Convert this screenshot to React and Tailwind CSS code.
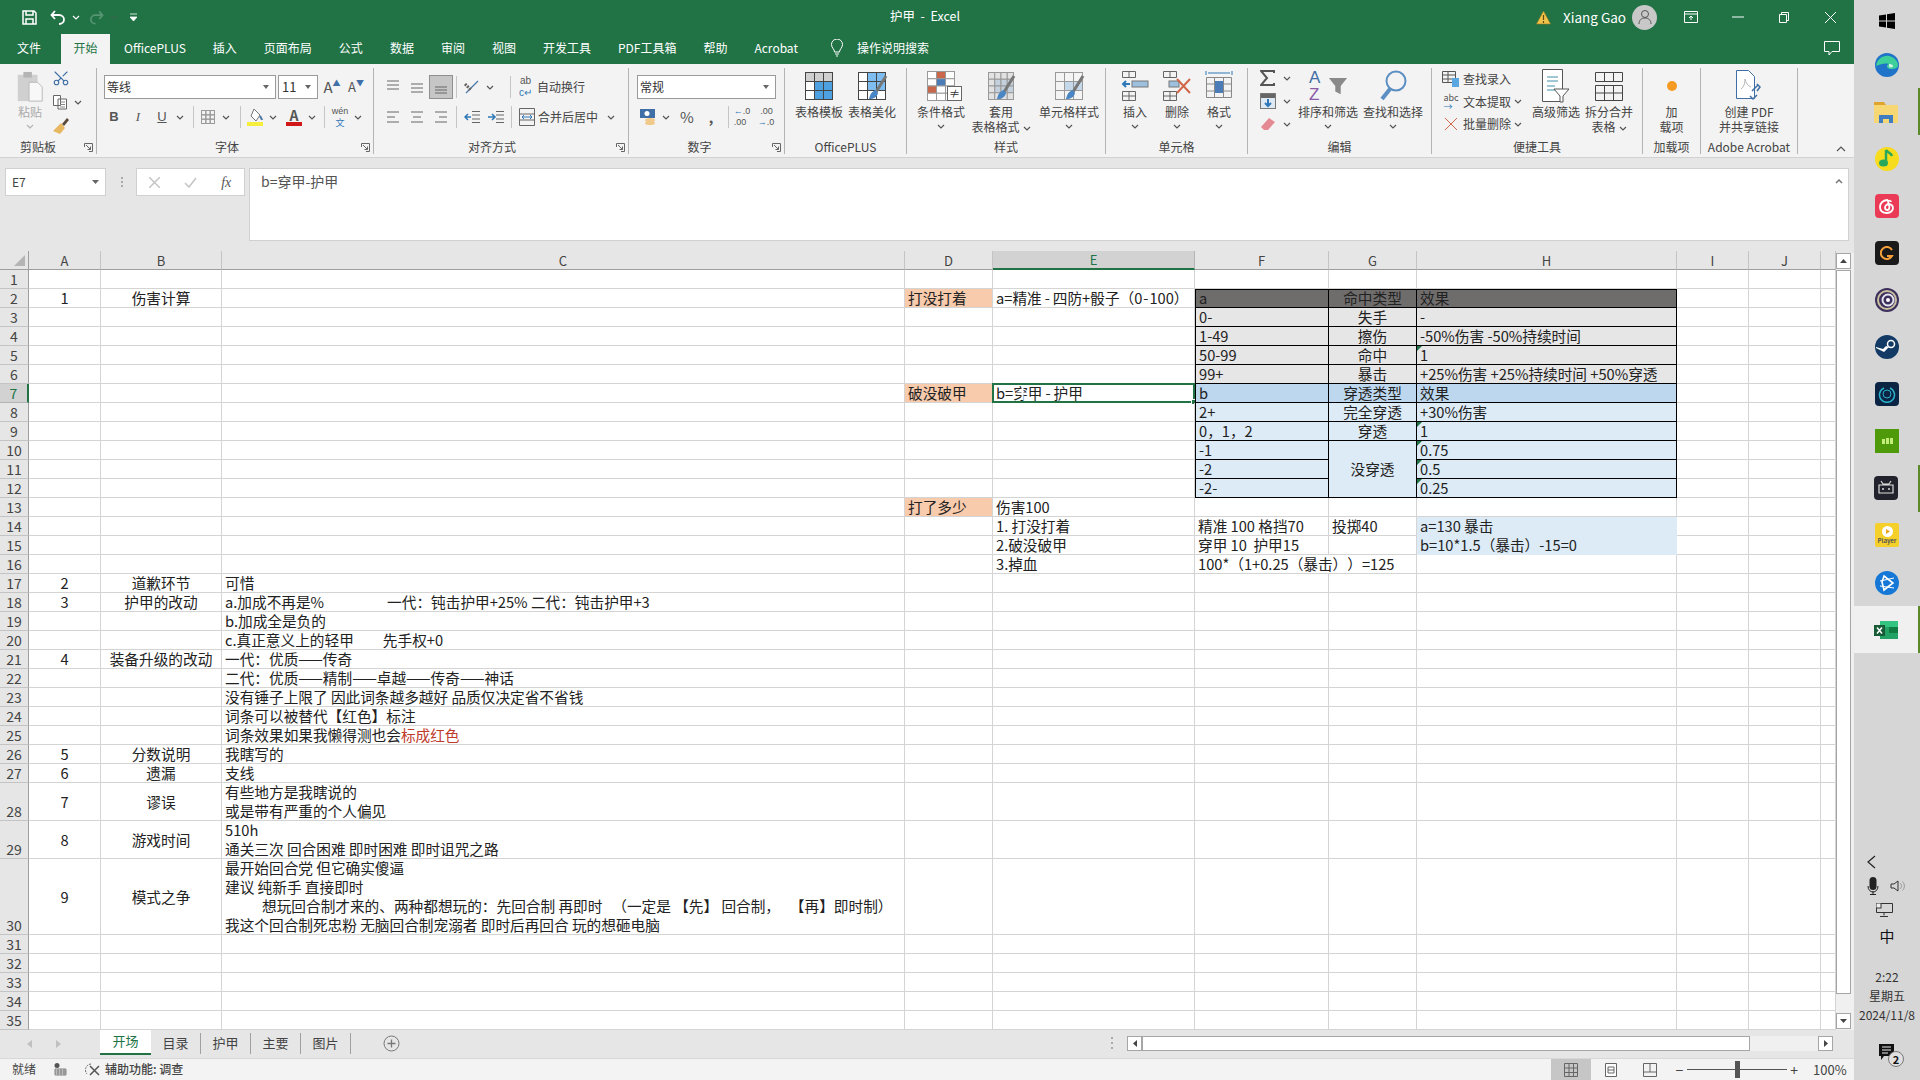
import { Scissors } from 'lucide-react';

const COLS = ['A', 'B', 'C', 'D', 'E', 'F', 'G', 'H', 'I', 'J', ''];

const FILLS = {
  head: 'bg-[#6f6c6c]',
  grey: 'bg-[#e7e6e6]',
  blueHead: 'bg-[#bdd7ee]',
  blue: 'bg-[#ddebf7]',
  orange: 'bg-[#f8cbad]',
};

const CELLS = {
  A2: { t: '1', center: true }, B2: { t: '伤害计算', center: true },
  D2: { t: '打没打着', fill: 'orange' },
  E2: { t: <>a=精准<span className="mx-[3px]">-</span>四防+骰子（0<span className="mx-[1px]">-</span>100）</> },
  F2: { t: 'a', fill: 'head' }, G2: { t: '命中类型', fill: 'head', center: true }, H2: { t: '效果', fill: 'head' },
  F3: { t: '0-', fill: 'grey' }, G3: { t: '失手', fill: 'grey', center: true }, H3: { t: '-', fill: 'grey' },
  F4: { t: '1-49', fill: 'grey' }, G4: { t: '擦伤', fill: 'grey', center: true }, H4: { t: '-50%伤害 -50%持续时间', fill: 'grey' },
  F5: { t: '50-99', fill: 'grey' }, G5: { t: '命中', fill: 'grey', center: true }, H5: { t: '1', fill: 'grey', flag: true },
  F6: { t: '99+', fill: 'grey' }, G6: { t: '暴击', fill: 'grey', center: true }, H6: { t: '+25%伤害 +25%持续时间 +50%穿透', fill: 'grey' },
  D7: { t: '破没破甲', fill: 'orange' },
  E7: { t: <>b=穿甲<span className="mx-[3px]">-</span>护甲</>, active: true },
  F7: { t: 'b', fill: 'blueHead' }, G7: { t: '穿透类型', fill: 'blueHead', center: true }, H7: { t: '效果', fill: 'blueHead' },
  F8: { t: '2+', fill: 'blue' }, G8: { t: '完全穿透', fill: 'blue', center: true }, H8: { t: '+30%伤害', fill: 'blue' },
  F9: { t: '0，1，2', fill: 'blue' }, G9: { t: '穿透', fill: 'blue', center: true }, H9: { t: '1', fill: 'blue', flag: true },
  F10: { t: '-1', fill: 'blue' }, G10: { t: '没穿透', fill: 'blue', center: true, merged: true, middle: true }, H10: { t: '0.75', fill: 'blue', flag: true },
  F11: { t: '-2', fill: 'blue' }, H11: { t: '0.5', fill: 'blue', flag: true },
  F12: { t: '-2-', fill: 'blue' }, H12: { t: '0.25', fill: 'blue', flag: true },
  D13: { t: '打了多少', fill: 'orange' }, E13: { t: '伤害100' },
  E14: { t: '1. 打没打着' }, F14: { t: '精准 100 格挡70' }, G14: { t: '投掷40' }, H14: { t: 'a=130 暴击', fill: 'blue', plain: true },
  E15: { t: '2.破没破甲' }, F15: { t: '穿甲 10  护甲15' }, H15: { t: 'b=10*1.5（暴击）-15=0', fill: 'blue', plain: true },
  E16: { t: '3.掉血' }, F16: { t: '100*（1+0.25（暴击））=125', wide: true },
  A17: { t: '2', center: true }, B17: { t: '道歉环节', center: true }, C17: { t: '可惜' },
  A18: { t: '3', center: true }, B18: { t: '护甲的改动', center: true },
  C18: { t: <>a.加成不再是%<span className="ml-[63px]">一代：钝击护甲+25% 二代：钝击护甲+3</span></> },
  C19: { t: 'b.加成全是负的' },
  C20: { t: <>c.真正意义上的轻甲<span className="ml-[29px]">先手权+0</span></> },
  A21: { t: '4', center: true }, B21: { t: '装备升级的改动', center: true }, C21: { t: '一代：优质——传奇' },
  C22: { t: '二代：优质——精制——卓越——传奇——神话' },
  C23: { t: '没有锤子上限了 因此词条越多越好 品质仅决定省不省钱' },
  C24: { t: '词条可以被替代【红色】标注' },
  C25: { t: <>词条效果如果我懒得测也会<span className="text-[#c0392b]">标成红色</span></> },
  A26: { t: '5', center: true }, B26: { t: '分数说明', center: true }, C26: { t: '我瞎写的' },
  A27: { t: '6', center: true }, B27: { t: '遗漏', center: true }, C27: { t: '支线' },
  A28: { t: '7', center: true, middle: true }, B28: { t: '谬误', center: true, middle: true },
  C28: { lines: ['有些地方是我瞎说的', '或是带有严重的个人偏见'] },
  A29: { t: '8', center: true, middle: true }, B29: { t: '游戏时间', center: true, middle: true },
  C29: { lines: ['510h', '通关三次 回合困难 即时困难 即时诅咒之路'] },
  A30: { t: '9', center: true, middle: true }, B30: { t: '模式之争', center: true, middle: true },
  C30: {
    lines: [
      '最开始回合党 但它确实傻逼',
      '建议 纯新手 直接即时',
      <span className="ml-[37px]">想玩回合制才来的、两种都想玩的：先回合制 再即时   （一定是 【先】 回合制，   【再】即时制）</span>,
      '我这个回合制死忠粉 无脑回合制宠溺者 即时后再回合 玩的想砸电脑',
    ],
  },
};

const TABLE_COLS = ['F', 'G', 'H'];

function Chev({ className = '' }) {
  return (
    <svg width="8" height="5" viewBox="0 0 8 5" className={className}>
      <path d="M1 1l3 3 3-3" fill="none" stroke="#555" strokeWidth="1.2" />
    </svg>
  );
}

function Slot({ w = 'w-[24px]', children, className = '' }) {
  return <div className={`flex h-[24px] shrink-0 items-center justify-center ${w} ${className}`}>{children}</div>;
}

function Sep({ className = '' }) {
  return <div className={`h-[22px] w-px shrink-0 bg-[#c6c6c6] ${className}`} />;
}

function Group({ w, label, launcher, children }) {
  return (
    <div className={`my-[4px] flex h-[86px] shrink-0 flex-col border-r border-[#b4b4b4] ${w}`}>
      <div className="flex h-[70px]">{children}</div>
      <div className="relative h-[16px] text-center text-[12px] leading-[18px] text-[#444]">
        {label}
        {launcher && (
          <svg width="9" height="9" viewBox="0 0 9 9" className="absolute right-[3px] top-[5px]">
            <path d="M.5 4V.5H8.5V8.5H5M2 2l4.5 4.5M3.5 6.5h3v-3" fill="none" stroke="#666" strokeWidth="1" />
          </svg>
        )}
      </div>
    </div>
  );
}

function Big({ w, icon, lines, chev, inlineChev }) {
  return (
    <div className={`flex shrink-0 flex-col items-center ${w}`}>
      <div className="flex h-[36px] items-center justify-center">{icon}</div>
      {lines.map((line, i) => (
        <div key={i} className="whitespace-nowrap text-[12px] leading-[15px] text-[#444]">
          {line}
          {inlineChev && i === lines.length - 1 && <Chev className="ml-[3px] inline" />}
        </div>
      ))}
      {chev && <div className="flex h-[15px] items-center"><Chev /></div>}
    </div>
  );
}

function Lines({ y = [2, 7, 12], x = [[2, 14], [2, 14], [2, 14]] }) {
  return (
    <svg width="16" height="14" viewBox="0 0 16 14">
      {y.map((v, i) => <path key={i} d={`M${x[i][0]} ${v}H${x[i][1]}`} stroke="#666" strokeWidth="1" />)}
    </svg>
  );
}

function SmallRow({ icon, label, chev }) {
  return (
    <div className="flex h-[22.5px] items-center whitespace-nowrap text-[12px] text-[#444]">
      <div className="flex w-[24px] justify-center">{icon}</div>
      <span>{label}</span>
      {chev && <Chev className="ml-[3px]" />}
    </div>
  );
}

function GridIcon({ w = 28, h = 28, rows = 3, cols = 3, fill, stroke = '#666' }) {
  const cells = [];
  for (let r = 0; r < rows; r++) {
    for (let c = 0; c < cols; c++) {
      cells.push(<rect key={`${r}-${c}`} x={0.5 + (c * (w - 1)) / cols} y={0.5 + (r * (h - 1)) / rows} width={(w - 1) / cols} height={(h - 1) / rows} fill={fill ? fill(r, c) : 'none'} stroke={stroke} />);
    }
  }
  return <svg width={w} height={h}>{cells}</svg>;
}

function Brush({ className }) {
  return (
    <svg width="20" height="26" viewBox="0 0 20 26" className={className}>
      <path d="M18 1L8 17" stroke="#777" strokeWidth="3" />
      <path d="M8 15c-4 1-6 4-7 9 5 0 8-2 9-6z" fill="#4b86c4" />
    </svg>
  );
}

function Ribbon() {
  return (
    <div className="flex h-[94px] border-b border-[#d2d2d2] bg-[#f3f3f3] [font-family:'Noto_Sans_CJK_SC',sans-serif]">
      <Group w="w-[97px]" label={<span className="pr-[20px]">剪贴板</span>} launcher>
        <div className="ml-[14px] flex w-[32px] flex-col items-center pt-[3px]">
          <svg width="28" height="32" viewBox="0 0 28 34">
            <rect x="1" y="4" width="21" height="28" fill="#d0d0d0" />
            <rect x="7" y="1" width="9" height="6" fill="#b5b5b5" />
            <path d="M13 12h9l5 5v15H13z" fill="#f8f8f8" stroke="#b8b8b8" />
          </svg>
          <span className="text-[12px] leading-[17px] text-[#aaa]">粘贴</span>
          <Chev className="mt-[4px] opacity-40" />
        </div>
        <div className="ml-[6px] flex flex-col items-start gap-[7px] pt-[1px]">
          <Scissors size={18} color="#3f6fa6" strokeWidth={1.5} className="-rotate-90" />
          <div className="flex items-center gap-[6px]">
            <svg width="16" height="16" viewBox="0 0 16 16"><path d="M1.5 1.5h7v10h-7zM6 5h8.5v10H6z" fill="#fff" stroke="#666" /><path d="M8 8h5M8 10.500h5M8 13h5" stroke="#888" /></svg>
            <Chev />
          </div>
          <svg width="18" height="18" viewBox="0 0 18 18"><path d="M10 7l5-6 2 2-5 6z" fill="#5b4a3a" /><path d="M9 6l4 5-5 6-7-3z" fill="#e8b860" /></svg>
        </div>
      </Group>

      <Group w="w-[277px]" label={<span className="pr-[16px]">字体</span>} launcher>
        <div className="flex w-full flex-col pt-[7px]">
          <div className="flex h-[24px] items-center">
            <div className="ml-[7px] flex h-[24px] w-[172px] items-center justify-between border border-[#9a9a9a] bg-white pl-[2px] pr-[6px] text-[12px] text-[#333]">等线<svg width="6" height="4"><path d="M0 0h6L3 4z" fill="#666" /></svg></div>
            <div className="ml-[2px] flex h-[24px] w-[40px] items-center justify-between border border-[#9a9a9a] bg-white pl-[3px] pr-[6px] text-[13px] text-[#333]">11<svg width="6" height="4"><path d="M0 0h6L3 4z" fill="#666" /></svg></div>
            <Slot className="ml-[2px] text-[15px] text-[#555]">A<sup className="text-[8px] text-[#3f6fa6]">▲</sup></Slot>
            <Slot className="text-[13px] text-[#555]">A<sup className="text-[8px] text-[#3f6fa6]">▼</sup></Slot>
          </div>
          <div className="mt-[6px] flex h-[24px] items-center pl-[5px] text-[#555]">
            <Slot className="text-[13px] font-bold [font-family:'Liberation_Sans',sans-serif]">B</Slot>
            <Slot className="text-[13px] italic [font-family:'Liberation_Serif',serif]">I</Slot>
            <Slot className="text-[13px] underline [font-family:'Liberation_Sans',sans-serif]">U</Slot>
            <Slot w="w-[12px]"><Chev /></Slot>
            <Sep className="ml-[7px]" />
            <Slot className="ml-[2px]"><GridIcon w={14} h={14} rows={3} cols={3} stroke="#9a9a9a" /></Slot>
            <Slot w="w-[12px]"><Chev /></Slot>
            <Sep className="ml-[8px]" />
            <Slot className="ml-[2px]">
              <svg width="18" height="18" viewBox="0 0 18 18"><path d="M8 1l6 6-4 6-5-5z" fill="#fff" stroke="#777" /><path d="M14 8c1 2 2 3 2 4" stroke="#4b78a8" strokeWidth="2" fill="none" /><rect x="1" y="14" width="16" height="4" fill="#f6ee3c" /></svg>
            </Slot>
            <Slot w="w-[12px]"><Chev /></Slot>
            <Slot className="ml-[3px]">
              <div className="flex flex-col items-center text-[14px] font-bold leading-[13px] text-[#555]">A<div className="h-[4px] w-[16px] bg-[#d01818]" /></div>
            </Slot>
            <Slot w="w-[12px]"><Chev /></Slot>
            <Sep className="ml-[6px]" />
            <Slot className="ml-[3px]">
              <div className="flex flex-col items-center text-[9px] leading-[12px] text-[#555]">
                <span className="[font-family:'Liberation_Sans',sans-serif]">wén</span>
                <span className="text-[#2f78b7]">文</span>
              </div>
            </Slot>
            <Slot w="w-[12px]"><Chev /></Slot>
          </div>
        </div>
      </Group>

      <Group w="w-[255px]" label={<span className="pr-[18px]">对齐方式</span>} launcher>
        <div className="flex w-full flex-col pt-[7px] text-[12px] text-[#444]">
          <div className="flex h-[24px] items-center pl-[7px]">
            <Slot><Lines y={[1, 5, 9]} x={[[2, 14], [2, 14], [2, 14]]} /></Slot>
            <Slot><Lines y={[4, 8, 12]} /></Slot>
            <Slot className="border border-[#8f8f8f] bg-[#c6c6c6]"><Lines y={[7, 10, 13]} /></Slot>
            <Sep className="ml-[3px]" />
            <Slot className="ml-[3px]">
              <svg width="18" height="18" viewBox="0 0 18 18"><path d="M3 15L15 3" stroke="#4b78a8" strokeWidth="1.2" /><path d="M2 6l6 6" stroke="#666" strokeWidth="3" strokeDasharray="2 1" /></svg>
            </Slot>
            <Slot w="w-[12px]"><Chev /></Slot>
            <Sep className="ml-[14px]" />
            <Slot w="w-[23px]" className="ml-[3px]">
              <div className="flex flex-col items-center text-[10px] leading-[12px] text-[#555] [font-family:'Liberation_Sans',sans-serif]">ab<span className="text-[#2f78b7]">c↵</span></div>
            </Slot>
            <span>自动换行</span>
          </div>
          <div className="mt-[6px] flex h-[24px] items-center pl-[7px]">
            <Slot><Lines x={[[2, 14], [2, 10], [2, 14]]} /></Slot>
            <Slot><Lines x={[[2, 14], [4, 12], [2, 14]]} /></Slot>
            <Slot><Lines x={[[2, 14], [6, 14], [2, 14]]} /></Slot>
            <Sep className="ml-[3px]" />
            <Slot className="ml-[3px]">
              <svg width="16" height="14" viewBox="0 0 16 14"><path d="M8 1.500h8M8 5h8M8 9h8M8 12.500h8" stroke="#666" /><path d="M7 7H1M4 4L1 7l3 3" stroke="#2f78b7" strokeWidth="1.500" fill="none" /></svg>
            </Slot>
            <Slot>
              <svg width="16" height="14" viewBox="0 0 16 14"><path d="M8 1.500h8M8 5h8M8 9h8M8 12.500h8" stroke="#666" /><path d="M0 7h6M4 4l3 3-3 3" stroke="#2f78b7" strokeWidth="1.500" fill="none" /></svg>
            </Slot>
            <Sep className="ml-[3px]" />
            <Slot w="w-[23px]" className="ml-[3px]">
              <svg width="16" height="18" viewBox="0 0 16 18"><path d="M.5.5h15v17H.5zM.5 6h15M.5 12h15" fill="none" stroke="#666" /><path d="M3 9h10M3 9l2-2M3 9l2 2M13 9l-2-2M13 9l-2 2" stroke="#2f78b7" /></svg>
            </Slot>
            <span>合并后居中</span>
            <Chev className="ml-[9px]" />
          </div>
        </div>
      </Group>

      <Group w="w-[156px]" label={<span className="pr-[14px]">数字</span>} launcher>
        <div className="flex w-full flex-col pt-[7px] text-[#555]">
          <div className="ml-[8px] flex h-[24px] w-[139px] items-center justify-between border border-[#9a9a9a] bg-white pl-[2px] pr-[6px] text-[12px] text-[#333]">常规<svg width="6" height="4"><path d="M0 0h6L3 4z" fill="#666" /></svg></div>
          <div className="mt-[6px] flex h-[24px] items-center pl-[7px]">
            <Slot>
              <svg width="18" height="20" viewBox="0 0 18 20"><rect x="1" y="2" width="15" height="9" fill="#3f6fa6" /><circle cx="8" cy="6.500" r="2.500" fill="#fff" /><ellipse cx="11" cy="13" rx="5" ry="2" fill="#f1c98a" /><ellipse cx="11" cy="16" rx="5" ry="2" fill="#f1c98a" /></svg>
            </Slot>
            <Slot w="w-[12px]"><Chev /></Slot>
            <Slot className="ml-[3px] text-[15px]">%</Slot>
            <Slot className="text-[14px] font-bold">,</Slot>
            <Sep className="ml-[5px]" />
            <Slot className="ml-[1px]"><div className="text-[9px] leading-[11px] [font-family:'Liberation_Sans',sans-serif]"><span className="text-[#2f78b7]">←</span>.0<br />.00</div></Slot>
            <Slot><div className="text-[9px] leading-[11px] [font-family:'Liberation_Sans',sans-serif]">&nbsp;.00<br /><span className="text-[#2f78b7]">→</span>.0</div></Slot>
          </div>
        </div>
      </Group>

      <Group w="w-[122px]" label="OfficePLUS">
        <Big w="ml-[7px] w-[54px]" lines={['表格模板']} icon={<GridIcon w={28} h={28} rows={3} cols={3} fill={(r, c) => (r === 0 ? '#cfcfcf' : c > 0 ? '#4ea1e0' : '#fff')} stroke="#444" />} />
        <Big w="w-[52px]" lines={['表格美化']} icon={
          <div className="relative">
            <GridIcon w={28} h={28} rows={3} cols={3} fill={(r, c) => (r < 2 && c > 0 ? '#7fbdf0' : '#fff')} stroke="#444" />
            <Brush className="absolute left-[10px] top-[3px]" />
          </div>} />
      </Group>

      <Group w="w-[199px]" label="样式">
        <Big w="ml-[4px] w-[60px]" lines={['条件格式']} chev icon={
          <div className="relative">
            <GridIcon w={28} h={30} rows={4} cols={3} fill={(r, c) => (c === 1 && r < 2 ? (r === 0 ? '#c8674a' : '#4b7cb8') : c === 0 && r === 2 ? '#c8674a' : '#fff')} stroke="#999" />
            <div className="absolute -right-[7px] bottom-0 flex h-[15px] w-[15px] items-center justify-center border border-[#666] bg-white text-[11px] leading-none text-[#333]">≠</div>
          </div>} />
        <Big w="w-[60px]" lines={['套用', '表格格式']} inlineChev icon={
          <div className="relative">
            <GridIcon w={26} h={28} rows={4} cols={4} fill={(r, c) => (r > 0 && c > 0 && r < 3 ? '#c4d0dc' : '#e2e2e2')} stroke="#999" />
            <Brush className="absolute left-[8px] top-[3px]" />
          </div>} />
        <Big w="ml-[4px] w-[68px]" lines={['单元格样式']} chev icon={
          <div className="relative">
            <GridIcon w={28} h={28} rows={3} cols={3} fill={(r, c) => (r === 1 && c > 0 ? '#c4d8ea' : '#f4f4f4')} stroke="#999" />
            <Brush className="absolute left-[10px] top-[3px]" />
          </div>} />
      </Group>

      <Group w="w-[142px]" label="单元格">
        <Big w="ml-[8px] w-[42px]" lines={['插入']} chev icon={
          <svg width="28" height="32" viewBox="0 0 28 32"><path d="M1.500 1.500h13v6h-13zM8 1.500v6M1.500 21.500h13v9h-13zM1.500 26h13M8 21.500v9" fill="none" stroke="#666" /><path d="M9 14H2M5 11l-3 3 3 3" stroke="#2f78b7" strokeWidth="2" fill="none" /><rect x="11" y="11" width="16" height="6" fill="#9cc0dd" stroke="#777" /></svg>} />
        <Big w="w-[42px]" lines={['删除']} chev icon={
          <svg width="30" height="32" viewBox="0 0 30 32"><path d="M1.500 1.500h13v6h-13zM8 1.500v6M1.500 21.500h13v9h-13zM1.500 26h13M8 21.500v9" fill="none" stroke="#666" /><rect x="7" y="11" width="10" height="6" fill="#9cc0dd" stroke="#777" /><path d="M15 9l13 14M28 9L15 23" stroke="#d0664a" strokeWidth="2" /></svg>} />
        <Big w="w-[42px]" lines={['格式']} chev icon={
          <svg width="28" height="34" viewBox="0 0 28 34"><path d="M1 2v4M27 2v4M3 4h22" stroke="#2f78b7" fill="none" /><path d="M1.500 8.500h25v20h-25zM9.500 8.500v20M18.500 8.500v20M1.500 15h25M1.500 22h25" fill="none" stroke="#888" /><rect x="10" y="12" width="8" height="12" fill="#4b7cb8" /></svg>} />
      </Group>

      <Group w="w-[184px]" label="编辑">
        <div className="ml-[6px] flex w-[44px] shrink-0 flex-col gap-[3px]">
          <div className="flex h-[20px] items-center gap-[7px] pl-[6px]">
            <svg width="16" height="16" viewBox="0 0 16 16"><path d="M14 3V1H1l6 7-6 7h13v-2" fill="none" stroke="#555" strokeWidth="2" /></svg><Chev />
          </div>
          <div className="flex h-[20px] items-center gap-[7px] pl-[6px]">
            <svg width="16" height="16" viewBox="0 0 16 16"><rect x=".5" y=".5" width="15" height="15" fill="#dfe9f3" stroke="#777" /><rect x="1" y="1" width="14" height="4" fill="#666" /><path d="M8 6v7M5 10l3 3 3-3" stroke="#2f78b7" strokeWidth="2" fill="none" /></svg><Chev />
          </div>
          <div className="flex h-[20px] items-center gap-[7px] pl-[6px]">
            <svg width="16" height="14" viewBox="0 0 16 14"><path d="M9 1l6 4-7 8H4L1 10z" fill="#e58a92" /></svg><Chev />
          </div>
        </div>
        <Big w="w-[60px]" lines={['排序和筛选']} chev icon={
          <div className="relative flex h-[36px] w-[42px] flex-col items-start pl-[2px] pt-[1px] text-[17px] leading-[17px] text-[#8a5ba8] [font-family:'Liberation_Sans',sans-serif]">
            <span className="text-[#3f6fa6]">A</span><span>Z</span>
            <svg width="22" height="20" viewBox="0 0 22 22" className="absolute right-0 top-[9px]"><path d="M1 1h20l-7 9v9l-6-3v-6z" fill="#8a8a8a" /></svg>
          </div>} />
        <Big w="ml-[3px] w-[64px]" lines={['查找和选择']} chev icon={
          <svg width="28" height="34" viewBox="0 0 28 34"><circle cx="17" cy="12" r="9.500" fill="none" stroke="#5b8ec2" strokeWidth="2" /><path d="M11 20L3 30" stroke="#5b8ec2" strokeWidth="4" /></svg>} />
      </Group>

      <Group w="w-[211px]" label="便捷工具">
        <div className="ml-[7px] w-[91px] shrink-0">
          <SmallRow label="查找录入" icon={<svg width="18" height="18" viewBox="0 0 18 18"><path d="M.5 1.500h13v11H.5zM.5 5h13M.5 9h13M6 1.500v11" fill="none" stroke="#555" /><rect x="10" y="8" width="7" height="9" fill="#5aa6e0" /></svg>} />
          <SmallRow label="文本提取" chev icon={<div className="flex flex-col text-[9px] leading-[9px] text-[#555]">abc<span className="text-[#2f78b7]">→</span></div>} />
          <SmallRow label="批量删除" chev icon={<svg width="14" height="14" viewBox="0 0 14 14"><path d="M1 1l12 12M13 1L1 13" stroke="#d0664a" /></svg>} />
        </div>
        <Big w="w-[52px]" lines={['高级筛选']} icon={
          <svg width="28" height="34" viewBox="0 0 28 34"><path d="M.5.500h20v32H.5z" fill="#fff" stroke="#555" /><path d="M5 8h11M5 12h11M5 17h8M5 21h8" stroke="#3f8fa8" /><path d="M12 20h15l-6 7v6h-3v-6z" fill="#fff" stroke="#555" /></svg>} />
        <Big w="w-[54px]" lines={['拆分合并', '表格']} inlineChev icon={
          <svg width="28" height="32" viewBox="0 0 28 32"><path d="M.5 2.500h27v9H.5zM9.500 2.500v9M18.500 2.500v9M.5 15.500h27v15H.5zM.5 23h27M9.500 15.500v15M18.500 15.500v15" fill="none" stroke="#444" /></svg>} />
      </Group>

      <Group w="w-[58px]" label="加载项">
        <Big w="w-full" lines={['加', '载项']} icon={<div className="h-[10px] w-[10px] rounded-full bg-[#f59a23]" />} />
      </Group>

      <Group w="w-[97px]" label="Adobe Acrobat">
        <Big w="w-full" lines={['创建 PDF', '并共享链接']} icon={
          <svg width="28" height="34" viewBox="0 0 28 34"><path d="M1.500 1.500h12l6 6v22h-18z" fill="#fff" stroke="#3f6fa6" /><path d="M6 20c3-2 4-6 4-10 1 4 3 7 6 8" fill="none" stroke="#b8b8b8" /><path d="M17 22l6-6M15 27l3 3 4-4M22 15l3 3-3 4" fill="none" stroke="#3f6fa6" strokeWidth="1.500" /></svg>} />
      </Group>

      <div className="flex flex-1 items-end justify-end pb-[5px] pr-[8px]">
        <svg width="10" height="6" viewBox="0 0 10 6"><path d="M1 5l4-4 4 4" fill="none" stroke="#555" strokeWidth="1.200" /></svg>
      </div>
    </div>
  );
}

function TitleBar() {
  const tabs = ['OfficePLUS', '插入', '页面布局', '公式', '数据', '审阅', '视图', '开发工具', 'PDF工具箱', '帮助', 'Acrobat'];
  return (
    <div className="h-[64px] bg-[#217346] text-white [font-family:'Noto_Sans_CJK_SC',sans-serif]">
      <div className="relative flex h-[34px] items-center">
        <svg width="15" height="15" viewBox="0 0 15 15" className="ml-[22px]"><path d="M1 1h11l2 2v11H1zM4 1v4h7V1M4 14V9h7v5" fill="none" stroke="#fff" strokeWidth="1.500" /></svg>
        <svg width="16" height="15" viewBox="0 0 16 15" className="ml-[13px]"><path d="M5 1L1.500 5 5 9M2 5h7c3 0 5 2 5 4.500S12 14 9 14" fill="none" stroke="#fff" strokeWidth="1.800" /></svg>
        <Chev className="ml-[6px] brightness-[3]" />
        <svg width="15" height="15" viewBox="0 0 16 15" className="ml-[9px] opacity-40"><path d="M11 1l3.500 4L11 9M14 5H7c-3 0-5 2-5 4.500S4 14 7 14" fill="none" stroke="#a6c8b4" strokeWidth="1.800" /></svg>
        <Chev className="ml-[6px] opacity-40" />
        <svg width="7" height="8" viewBox="0 0 7 8" className="ml-[12px]"><path d="M0 1h7M0 4h7L3.500 8z" stroke="#fff" fill="#fff" strokeWidth=".8" /></svg>
        <span className="absolute left-[890px] top-[7px] whitespace-pre text-[12.500px] leading-[18px]">护甲  -  Excel</span>
        <div className="ml-auto flex items-center">
          <svg width="15" height="15" viewBox="0 0 15 15"><path d="M7.500 1L14.500 14H.5z" fill="#f0c24a" stroke="#9a7a20" strokeWidth=".6" /><path d="M7.500 5v5M7.500 11v2" stroke="#5a4a10" strokeWidth="1.200" /></svg>
          <span className="ml-[12px] w-[69px] text-[13.500px]">Xiang Gao</span>
          <div className="flex h-[25px] w-[25px] items-center justify-center rounded-full bg-[#c8c8c8]">
            <svg width="14" height="16" viewBox="0 0 14 16"><circle cx="7" cy="5" r="3.500" fill="none" stroke="#555" /><path d="M1 15c0-4 2.500-6 6-6s6 2 6 6" fill="none" stroke="#555" /></svg>
          </div>
          <svg width="14" height="12" viewBox="0 0 14 12" className="ml-[27px]"><path d="M.5.500h13v11H.5zM.5 3h13M7 9V5M5 7l2-2 2 2" fill="none" stroke="#fff" /></svg>
          <svg width="12" height="2" viewBox="0 0 12 2" className="ml-[34px]"><path d="M0 1h12" stroke="#fff" /></svg>
          <svg width="10" height="11" viewBox="0 0 10 11" className="ml-[35px]"><path d="M.5 2.500h7v8h-7zM2.500 2.500V.5h7v8h-2" fill="none" stroke="#fff" /></svg>
          <svg width="11" height="11" viewBox="0 0 11 11" className="ml-[36px] mr-[18px]"><path d="M0 0l11 11M11 0L0 11" stroke="#fff" /></svg>
        </div>
      </div>
      <div className="flex h-[30px] items-start text-[12px] leading-[28px]">
        <span className="ml-[17px]">文件</span>
        <div className="ml-[20px] h-[30px] w-[49px] bg-[#f3f3f3] text-center text-[#217346]">开始</div>
        <div className="ml-[14px] flex gap-[27px] whitespace-nowrap">
          {tabs.map((tab) => <span key={tab}>{tab}</span>)}
        </div>
        <svg width="14" height="18" viewBox="0 0 14 18" className="ml-[32px] mt-[5px]"><path d="M4.500 13c0-3-3-4-3-7.500a5.500 5.500 0 0111 0C12.500 9 9.500 10 9.500 13zM5 15h4M6 17h2" fill="none" stroke="#fff" /></svg>
        <span className="ml-[13px]">操作说明搜索</span>
        <svg width="16" height="15" viewBox="0 0 16 15" className="ml-auto mr-[14px] mt-[7px]"><path d="M.5.500h15v10H8l-3 3.500v-3.500H.5z" fill="none" stroke="#fff" /></svg>
      </div>
    </div>
  );
}

function FormulaBar() {
  return (
    <div className="flex h-[93px] items-start bg-[#e6e6e6] pt-[10px] [font-family:'Noto_Sans_CJK_SC',sans-serif]">
      <div className="ml-[5px] flex h-[28px] w-[101px] items-center justify-between border border-[#d0d0d0] bg-white pl-[6px] pr-[6px] text-[12px] text-[#444]">
        E7<svg width="7" height="4"><path d="M0 0h7L3.500 4z" fill="#666" /></svg>
      </div>
      <div className="ml-[14px] flex h-[28px] w-[4px] flex-col items-center justify-center gap-[2px]">
        <span className="h-[2px] w-[2px] bg-[#aaa]" /><span className="h-[2px] w-[2px] bg-[#aaa]" /><span className="h-[2px] w-[2px] bg-[#aaa]" />
      </div>
      <div className="ml-[12px] flex h-[28px] w-[109px] items-center border border-[#d0d0d0] bg-white">
        <div className="flex w-[36px] justify-center"><svg width="11" height="11"><path d="M0 0l11 11M11 0L0 11" stroke="#c4c4c4" strokeWidth="1.500" /></svg></div>
        <div className="flex w-[36px] justify-center"><svg width="13" height="11"><path d="M1 6l4 4 7-9" fill="none" stroke="#c4c4c4" strokeWidth="1.500" /></svg></div>
        <div className="flex w-[36px] justify-center text-[14px] italic text-[#555] [font-family:'Liberation_Serif',serif]">fx</div>
      </div>
      <div className="ml-[4px] flex h-[73px] w-[1600px] items-start justify-between border border-[#d0d0d0] bg-white pl-[11px] pr-[5px] pt-[3px] text-[14px] leading-[18px] text-[#555]">
        b=穿甲-护甲
        <svg width="8" height="5" viewBox="0 0 8 5" className="mt-[7px]"><path d="M1 4l3-3 3 3" fill="none" stroke="#777" strokeWidth="1.500" /></svg>
      </div>
    </div>
  );
}

function cellClass(col, row, cell) {
  const inTable = TABLE_COLS.includes(col) && row >= 2 && row <= 12;
  const parts = ['relative flex overflow-visible whitespace-pre px-[3px] text-[14.670px] leading-[18px] text-[#222]'];
  parts.push(inTable ? 'border-r border-b border-black' : 'border-r border-b border-[#d4d4d4]');
  if (inTable && row === 2) parts.push('border-t');
  if (inTable && col === 'F') parts.push('border-l');
  if (cell?.plain) parts.push('border-transparent');
  if (cell?.fill) parts.push(FILLS[cell.fill]);
  if (cell?.center) parts.push('justify-center');
  parts.push(cell?.middle ? 'items-center' : 'items-end');
  if (cell?.merged) parts.push('row-span-3');
  if (cell?.wide) parts.push('col-span-2');
  return parts.join(' ');
}

function Sheet() {
  const rows = [];
  for (let r = 1; r <= 35; r++) rows.push(r);
  return (
    <div className="grid w-[1836px] grid-cols-[29px_72px_121px_683px_88px_202px_134px_88px_260px_72px_72px_15px] grid-rows-[repeat(28,19px)_38px_38px_76px_repeat(5,19px)] bg-white [font-family:'Noto_Sans_CJK_SC',sans-serif] [text-spacing-trim:space-all]">
      <div className="flex items-center justify-end border-b border-r border-[#9e9e9e] bg-[#e6e6e6] pr-[3px]">
        <svg width="11" height="11"><path d="M11 0v11H0z" fill="#b4b4b4" /></svg>
      </div>
      {COLS.map((c) => (
        c === 'E'
          ? <div key={c} className="flex items-center justify-center border-b-2 border-r border-b-[#217346] border-r-[#b4b4b4] bg-[#d2d2d2] text-[13px] leading-none text-[#217346]">{c}</div>
          : <div key={c || 'K'} className="flex items-center justify-center border-b border-r border-b-[#9e9e9e] border-r-[#c4c4c4] bg-[#e6e6e6] text-[13px] leading-none text-[#444]">{c}</div>
      ))}
      {rows.map((r) => (
        <div key={r} className="contents">
          <div className={r === 7
            ? 'flex items-end justify-center border-b border-r-2 border-b-[#b4b4b4] border-r-[#217346] bg-[#d2d2d2] text-[14px] leading-[18px] text-[#217346]'
            : 'flex items-end justify-center border-b border-r border-b-[#c4c4c4] border-r-[#9e9e9e] bg-[#e6e6e6] text-[14px] leading-[18px] text-[#444]'}>{r}</div>
          {COLS.map((c) => {
            const key = `${c}${r}`;
            const cell = CELLS[key];
            if (c === 'G' && (r === 11 || r === 12 || r === 16)) return null;
            return (
              <div key={key || c} className={cellClass(c, r, cell)}>
                {cell?.lines
                  ? <div className="flex flex-col">{cell.lines.map((line, i) => <div key={i} className="h-[19px] leading-[19px]">{line}</div>)}</div>
                  : <span>{cell?.t}</span>}
                {cell?.flag && <svg width="5" height="5" className="absolute left-0 top-0"><path d="M0 0h5L0 5z" fill="#217346" /></svg>}
                {cell?.active && (
                  <div className="pointer-events-none absolute -bottom-px -left-px -right-px -top-px border-2 border-[#217346]">
                    <svg width="13" height="13" viewBox="0 0 13 13" className="absolute left-[22px] top-[2px]"><path d="M6.500 0v13M0 6.500h13" stroke="#fff" strokeWidth="2" /></svg>
                    <div className="absolute -bottom-[4px] -right-[4px] h-[6px] w-[6px] border border-white bg-[#217346]" />
                  </div>
                )}
              </div>
            );
          })}
        </div>
      ))}
    </div>
  );
}

function VerticalScroll() {
  return (
    <div className="flex w-[18px] flex-col bg-[#f0f0f0]">
      <div className="h-[2px] bg-[#e6e6e6]" />
      <div className="flex h-[16px] w-[15px] items-center justify-center border border-[#a6a6a6] bg-white">
        <svg width="7" height="4"><path d="M3.500 0L7 4H0z" fill="#444" /></svg>
      </div>
      <div className="mt-[1px] h-[724px] w-[15px] border border-[#a6a6a6] bg-white" />
      <div className="flex-1" />
      <div className="flex h-[16px] w-[15px] items-center justify-center border border-[#a6a6a6] bg-white">
        <svg width="7" height="4"><path d="M0 0h7L3.500 4z" fill="#444" /></svg>
      </div>
      <div className="h-px" />
    </div>
  );
}

function SheetTabs() {
  const tabs = ['目录', '护甲', '主要', '图片'];
  return (
    <div className="flex h-[28px] items-start bg-[#e6e6e6] text-[13px] text-[#444] [font-family:'Noto_Sans_CJK_SC',sans-serif]">
      <svg width="5" height="8" className="ml-[27px] mt-[10px]"><path d="M5 0v8L0 4z" fill="#c0c0c0" /></svg>
      <svg width="5" height="8" className="ml-[24px] mt-[10px]"><path d="M0 0v8l5-4z" fill="#c0c0c0" /></svg>
      <div className="ml-[39px] flex h-[25px] w-[51px] items-center justify-center border-b-2 border-[#217346] bg-white pb-[2px] text-[#217346]">开场</div>
      {tabs.map((tab) => (
        <div key={tab} className="mt-[3px] flex h-[21px] w-[50px] items-center justify-center border-r border-[#a0a0a0] pb-[2px]">{tab}</div>
      ))}
      <svg width="17" height="17" viewBox="0 0 17 17" className="ml-[32px] mt-[5px]"><circle cx="8.500" cy="8.500" r="7.500" fill="none" stroke="#777" /><path d="M4.500 8.500h8M8.500 4.500v8" stroke="#777" strokeWidth="1.300" /></svg>
      <div className="ml-[711px] mt-[5px] flex h-[16px] w-[2px] flex-col justify-between py-[2px]">
        <span className="h-[2px] w-[2px] bg-[#aaa]" /><span className="h-[2px] w-[2px] bg-[#aaa]" /><span className="h-[2px] w-[2px] bg-[#aaa]" />
      </div>
      <div className="ml-[14px] mt-[6px] flex h-[15px] w-[706px] bg-[#f0f0f0]">
        <div className="flex w-[15px] items-center justify-center border border-[#a6a6a6] bg-white"><svg width="4" height="7"><path d="M4 0v7L0 3.500z" fill="#444" /></svg></div>
        <div className="w-[608px] border border-[#a6a6a6] bg-white" />
        <div className="flex-1" />
        <div className="flex w-[15px] items-center justify-center border border-[#a6a6a6] bg-white"><svg width="4" height="7"><path d="M0 0v7l4-3.500z" fill="#444" /></svg></div>
      </div>
    </div>
  );
}

function StatusBar() {
  return (
    <div className="flex h-[22px] items-center border-t border-[#d8d8d8] bg-[#f3f3f3] text-[12px] leading-[18px] text-[#444] [font-family:'Noto_Sans_CJK_SC',sans-serif]">
      <span className="ml-[12px] pb-[2px]">就绪</span>
      <svg width="13" height="13" viewBox="0 0 13 13" className="ml-[18px]"><circle cx="3" cy="2.500" r="2.500" fill="#555" /><path d="M1 6h11v6H1zM1 8h11M1 10h11M4 6v6M7 6v6M10 6v6" fill="none" stroke="#666" strokeWidth=".8" /></svg>
      <svg width="16" height="14" viewBox="0 0 16 14" className="ml-[18px]"><path d="M6 1a6 6 0 00-4 10" fill="none" stroke="#666" strokeDasharray="2 1" /><path d="M5 3l9 9M14 3l-9 9" stroke="#555" strokeWidth="1.500" /></svg>
      <span className="ml-[4px] pb-[2px] font-medium">辅助功能: 调查</span>
      <div className="ml-auto flex h-full items-center">
        <div className="flex h-full w-[40px] items-center justify-center bg-[#c6c6c6]">
          <svg width="14" height="14" viewBox="0 0 14 14"><path d="M.5.500h13v13H.5zM.5 5h13M.5 9.500h13M5 .5v13M9.500.5v13" fill="none" stroke="#666" /></svg>
        </div>
        <div className="flex h-full w-[39px] items-center justify-center">
          <svg width="14" height="14" viewBox="0 0 14 14"><path d="M1.500.5h11v13h-11z" fill="#fff" stroke="#666" /><path d="M4 4h6v6H4zM4 7h6" fill="none" stroke="#666" /></svg>
        </div>
        <div className="flex h-full w-[39px] items-center justify-center">
          <svg width="14" height="14" viewBox="0 0 14 14"><path d="M.5.500h13v13H.5zM.5 9h13M7 .5V9" fill="none" stroke="#666" /></svg>
        </div>
        <span className="ml-[6px] text-[14px] leading-none">−</span>
        <div className="relative ml-[4px] h-px w-[100px] bg-[#555]">
          <div className="absolute left-[48px] -top-[8px] h-[17px] w-[5px] bg-[#555]" />
        </div>
        <span className="ml-[3px] text-[14px] leading-none">+</span>
        <span className="ml-[15px] mr-[9px] w-[32px] text-[13px]">100%</span>
      </div>
    </div>
  );
}

function TaskIcon({ children, selected, mark, first }) {
  return (
    <div className={`flex items-center justify-center ${first ? 'h-[41px]' : 'h-[47.100px]'} ${selected ? 'bg-[#f0f0f0]' : ''} ${mark ? 'border-r-2 border-[#5a8a2a]' : ''}`}>
      {children}
    </div>
  );
}

function Taskbar() {
  return (
    <div className="flex h-[1080px] w-[66px] shrink-0 flex-col justify-between bg-[#d6d6d6] [font-family:'Noto_Sans_CJK_SC',sans-serif]">
      <div className="flex flex-col">
        <TaskIcon first><svg width="16" height="16" viewBox="0 0 16 16"><path d="M0 2.500L7 1.500v6H0zM8 1.300L16 0v7.500H8zM0 8.500h7v6l-7-1zM8 8.500h8V16l-8-1.300z" fill="#000" /></svg></TaskIcon>
        <TaskIcon>
          <svg width="24" height="24" viewBox="0 0 24 24"><circle cx="12" cy="12" r="12" fill="#1f73c8" /><path d="M1 13C2 6 8 2 14 3c5 1 9 5 9 9 0 3-3 4-7 4-3 0-4-1-4-3 0-1 1-2 2-2-4-1-8 0-13 2z" fill="#3ecf9a" /><path d="M14 11c3 0 4 1 4 2s-2 2-4 1z" fill="#d6f4e4" /></svg>
        </TaskIcon>
        <TaskIcon mark>
          <svg width="24" height="22" viewBox="0 0 24 22"><path d="M0 1h10l2 3H0z" fill="#e0a32e" /><path d="M0 4h24v18H0z" fill="#f7d774" /><path d="M5 14h14v8h-4v-4H9v4H5z" fill="#3f7cc0" /></svg>
        </TaskIcon>
        <TaskIcon>
          <svg width="24" height="24" viewBox="0 0 24 24"><circle cx="12" cy="12" r="12" fill="#f7dc1e" /><path d="M11 3v12" stroke="#27a85a" strokeWidth="2.500" /><ellipse cx="8.500" cy="16" rx="4.500" ry="3.500" fill="#27a85a" /><path d="M11 3c2 3 5 3 6 6" stroke="#27a85a" strokeWidth="2.500" fill="none" /></svg>
        </TaskIcon>
        <TaskIcon>
          <div className="flex h-[24px] w-[24px] items-center justify-center rounded-[4px] bg-[#ea3a56]">
            <svg width="16" height="16" viewBox="0 0 16 16"><path d="M9 2C4 2 1 5 1 9s3 6 7 6 6-3 6-5-2-4-4-4-4 2-4 3.500S7 12 8.500 12 11 10 10 7L9 3c1-1 3 0 3 1" fill="none" stroke="#fff" strokeWidth="1.800" /></svg>
          </div>
        </TaskIcon>
        <TaskIcon>
          <div className="flex h-[24px] w-[24px] items-center justify-center rounded-[4px] bg-[#1a1a1a]">
            <svg width="14" height="14" viewBox="0 0 14 14"><path d="M12 4a6 6 0 100 6H7" fill="none" stroke="#f5a03a" strokeWidth="2" /></svg>
          </div>
        </TaskIcon>
        <TaskIcon>
          <svg width="24" height="24" viewBox="0 0 24 24"><circle cx="12" cy="12" r="12" fill="#3c2f5c" /><circle cx="12" cy="12" r="9" fill="none" stroke="#c8c0a0" strokeWidth="2" /><circle cx="13" cy="12" r="5.500" fill="none" stroke="#e4e4f0" strokeWidth="2" /><circle cx="13" cy="12" r="2" fill="#fff" /></svg>
        </TaskIcon>
        <TaskIcon>
          <svg width="24" height="24" viewBox="0 0 24 24"><circle cx="12" cy="12" r="12" fill="#123a64" /><circle cx="16" cy="9" r="3.500" fill="none" stroke="#fff" strokeWidth="1.500" /><path d="M1 13l8 4 5-5-3-1-3 3-7-2z" fill="#fff" /></svg>
        </TaskIcon>
        <TaskIcon>
          <div className="flex h-[24px] w-[24px] items-center justify-center rounded-[4px] bg-[#0c2444]">
            <svg width="18" height="18" viewBox="0 0 18 18"><path d="M6 3a7.500 7.500 0 106 0" fill="none" stroke="#2ab0c8" strokeWidth="1.500" /><circle cx="9" cy="9" r="4" fill="none" stroke="#2ab0c8" /></svg>
          </div>
        </TaskIcon>
        <TaskIcon>
          <div className="flex h-[24px] w-[24px] items-center justify-center gap-[1px] bg-[#4f9a0a]">
            <span className="h-[5px] w-[3px] bg-[#c4ec7a]" /><span className="h-[6px] w-[3px] bg-[#c4ec7a]" /><span className="h-[6px] w-[3px] bg-[#c4ec7a]" />
          </div>
        </TaskIcon>
        <TaskIcon mark>
          <div className="flex h-[24px] w-[24px] items-center justify-center rounded-[4px] bg-[#22222c]">
            <svg width="18" height="16" viewBox="0 0 18 16"><path d="M4 1l2 3h6l2-3M2 5h14v8H2z" fill="none" stroke="#ddd" strokeWidth="1.200" /><path d="M6 8v2M12 8v2" stroke="#ddd" strokeWidth="1.500" /></svg>
          </div>
        </TaskIcon>
        <TaskIcon>
          <div className="flex h-[24px] w-[24px] flex-col items-center justify-center rounded-[2px] bg-[#f5cf2a]">
            <svg width="11" height="11" viewBox="0 0 11 11"><circle cx="5.500" cy="5.500" r="5.500" fill="#fff" /><path d="M4 3l4 2.500L4 8z" fill="#e8a81a" /></svg>
            <span className="text-[6px] font-bold leading-[7px] text-[#555]">Player</span>
          </div>
        </TaskIcon>
        <TaskIcon>
          <svg width="24" height="24" viewBox="0 0 24 24"><circle cx="12" cy="12" r="12" fill="#1578d6" /><path d="M9 5l9 7-9 7-2-8z" fill="none" stroke="#fff" strokeWidth="1.600" /><path d="M5 10l14-3M5 15l14 2" stroke="#fff" strokeWidth="1" /></svg>
        </TaskIcon>
        <TaskIcon selected mark>
          <svg width="24" height="18" viewBox="0 0 24 18"><rect x="6" width="18" height="18" fill="#21a366" /><rect x="6" width="18" height="6" fill="#33c481" /><rect x="15" y="6" width="9" height="6" fill="#107c41" /><rect y="4" width="11" height="11" fill="#185c37" /><path d="M3 6.500l5 6M8 6.500l-5 6" stroke="#fff" strokeWidth="1.500" /></svg>
        </TaskIcon>
      </div>
      <div className="flex flex-col items-center pb-[10px] text-[#333]">
        <div className="flex h-[24px] w-full items-center pl-[13px]">
          <svg width="9" height="14" viewBox="0 0 9 14"><path d="M8 1L1 7l7 6" fill="none" stroke="#222" strokeWidth="1.200" /></svg>
        </div>
        <div className="flex h-[24px] w-full items-center justify-center gap-[11px] pr-[2px]">
          <svg width="12" height="18" viewBox="0 0 12 18"><rect x="2.500" y="0" width="7" height="13" rx="3.500" fill="#222" /><path d="M1 9c0 8 10 8 10 0M6 14v3M3 17.500h6" fill="none" stroke="#222" /></svg>
          <svg width="16" height="14" viewBox="0 0 16 14"><path d="M1 5h3l4-3v10L4 9H1z" fill="none" stroke="#333" /><path d="M10 4c2 2 2 4 0 6M12.500 2.500c2.500 3 2.500 6 0 9" fill="none" stroke="#999" /></svg>
        </div>
        <div className="flex h-[24px] w-full items-center pl-[22px]">
          <svg width="17" height="14" viewBox="0 0 17 14"><path d="M.5.500h16v9H.5zM8 9.500v3M4 13.500h8" fill="none" stroke="#333" /><rect x="0" y="0" width="5" height="5" fill="#eee" stroke="#333" /></svg>
        </div>
        <div className="-mt-[2px] h-[32px] text-[15px] leading-[32px] text-[#111]">中</div>
        <div className="mt-[15px] text-[12px] leading-[19px]">2:22</div>
        <div className="text-[12px] leading-[19px]">星期五</div>
        <div className="whitespace-nowrap text-[12px] leading-[20px]">2024/11/8</div>
        <div className="relative mt-[19px] flex h-[26px] w-full justify-center">
          <svg width="17" height="17" viewBox="0 0 17 17"><path d="M0 0h15v12H5l-3 4v-4H0z" fill="#111" /><path d="M3 3h9M3 6h9M3 9h6" stroke="#eee" /></svg>
          <div className="absolute left-[34px] top-[7px] flex h-[16px] w-[16px] items-center justify-center rounded-full border border-[#777] bg-[#e0e0e0] text-[11px] font-bold leading-none text-[#111]">2</div>
        </div>
      </div>
    </div>
  );
}

export default function App() {
  return (
    <div className="flex h-[1080px] w-[1920px] overflow-hidden bg-white">
      <div className="flex w-[1854px] shrink-0 flex-col">
        <TitleBar />
        <Ribbon />
        <FormulaBar />
        <div className="flex">
          <Sheet />
          <VerticalScroll />
        </div>
        <SheetTabs />
        <StatusBar />
      </div>
      <Taskbar />
    </div>
  );
}
